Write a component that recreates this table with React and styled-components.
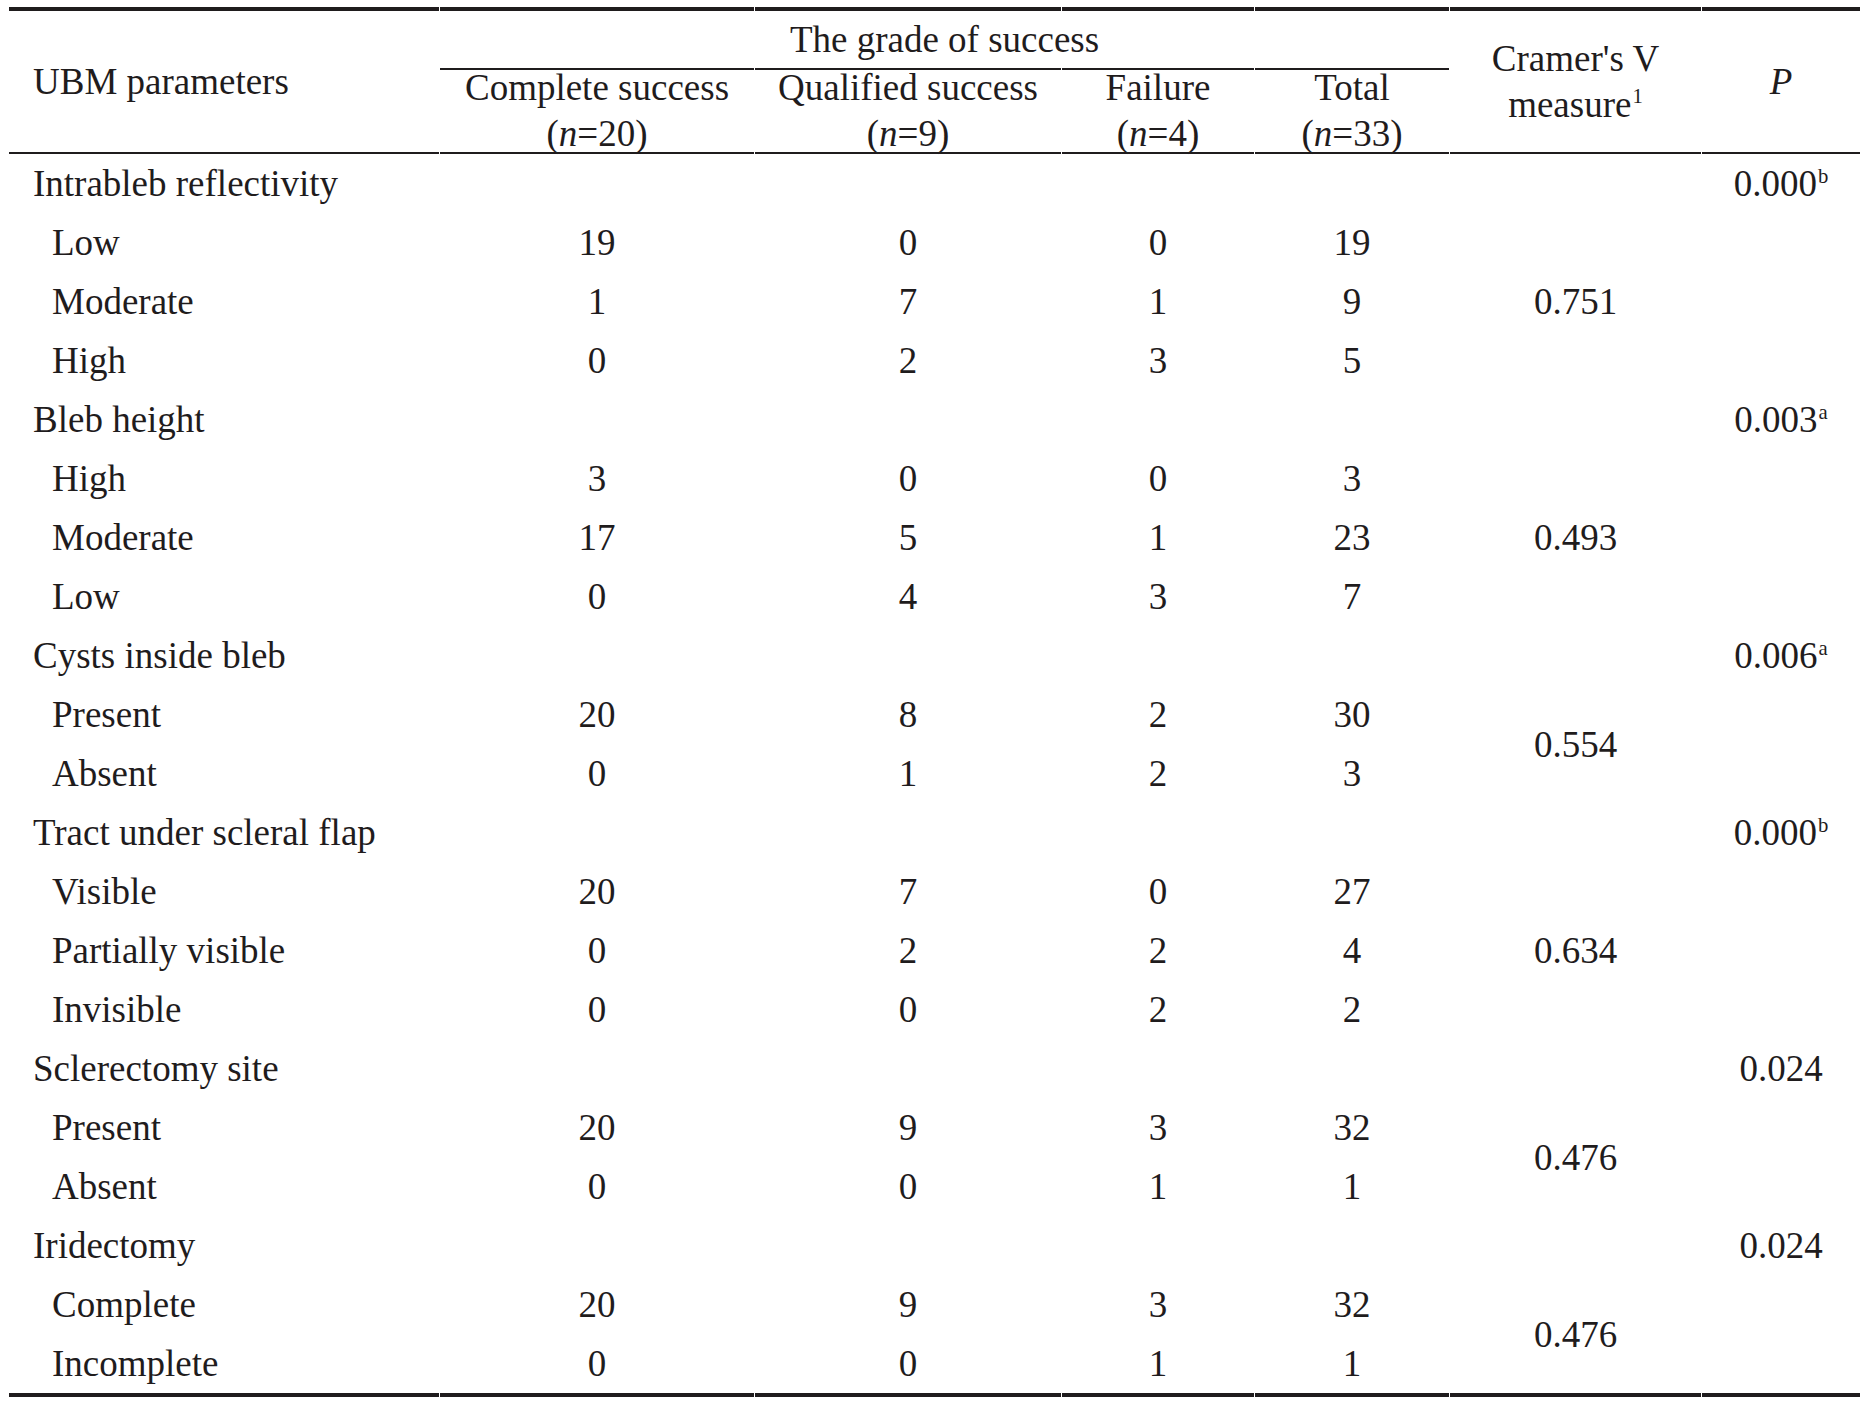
import React from 'react';
import styled, { createGlobalStyle } from 'styled-components';

const GlobalStyle = createGlobalStyle`
  body {
    margin: 0;
    background: #fff;
  }
`;

const COLS = '430px 314px 306px 192px 194px 251px 158px';
const INK = '#1f1c1d';

const Page = styled.div`
  padding: 7px 0 0 9px;
  font-family: 'Liberation Serif', 'Times New Roman', serif;
  font-size: 37px;
  color: ${INK};
`;

const Table = styled.div`
  width: 1851px;
`;

const Rule = styled.div`
  display: grid;
  grid-template-columns: ${COLS};
  column-gap: 1px;
`;

const RuleSeg = styled.div`
  height: ${p => p.$h}px;
  background: ${INK};
`;

const HeadGrid = styled.div`
  display: grid;
  grid-template-columns: ${COLS};
  grid-template-rows: 57px 84px;
  column-gap: 1px;
`;

const HeadCell = styled.div`
  grid-column: ${p => p.$col};
  grid-row: ${p => p.$row};
  display: flex;
  flex-direction: column;
  justify-content: center;
  align-items: ${p => (p.$left ? 'flex-start' : 'center')};
  padding-left: ${p => (p.$left ? '24px' : '0')};
  border-top: ${p => (p.$rule ? `2px solid ${INK}` : 'none')};
  line-height: 46px;
  white-space: nowrap;
  font-style: ${p => (p.$italic ? 'italic' : 'normal')};
`;

const BodyGrid = styled.div`
  display: grid;
  grid-template-columns: ${COLS};
  grid-template-rows: repeat(21, 59px);
  column-gap: 1px;
`;

const Cell = styled.div`
  grid-column: ${p => p.$col};
  grid-row: ${p => p.$row} / span ${p => p.$span || 1};
  display: flex;
  align-items: center;
  justify-content: ${p => (p.$indent ? 'flex-start' : 'center')};
  padding-left: ${p => p.$indent || 0}px;
  white-space: nowrap;
`;

const Sup = styled.sup`
  font-size: 0.56em;
  line-height: 0;
  vertical-align: super;
  margin-left: 1px;
`;

const Em = styled.i`
  font-style: italic;
`;

const groups = [
  {
    name: 'Intrableb reflectivity', p: '0.000', sup: 'b', v: '0.751',
    rows: [['Low', 19, 0, 0, 19], ['Moderate', 1, 7, 1, 9], ['High', 0, 2, 3, 5]],
  },
  {
    name: 'Bleb height', p: '0.003', sup: 'a', v: '0.493',
    rows: [['High', 3, 0, 0, 3], ['Moderate', 17, 5, 1, 23], ['Low', 0, 4, 3, 7]],
  },
  {
    name: 'Cysts inside bleb', p: '0.006', sup: 'a', v: '0.554',
    rows: [['Present', 20, 8, 2, 30], ['Absent', 0, 1, 2, 3]],
  },
  {
    name: 'Tract under scleral flap', p: '0.000', sup: 'b', v: '0.634',
    rows: [['Visible', 20, 7, 0, 27], ['Partially visible', 0, 2, 2, 4], ['Invisible', 0, 0, 2, 2]],
  },
  {
    name: 'Sclerectomy site', p: '0.024', v: '0.476',
    rows: [['Present', 20, 9, 3, 32], ['Absent', 0, 0, 1, 1]],
  },
  {
    name: 'Iridectomy', p: '0.024', v: '0.476',
    rows: [['Complete', 20, 9, 3, 32], ['Incomplete', 0, 0, 1, 1]],
  },
];

const outcomes = [
  ['Complete success', 20],
  ['Qualified success', 9],
  ['Failure', 4],
  ['Total', 33],
];

const FullRule = ({ h }) => (
  <Rule>
    {[0, 1, 2, 3, 4, 5, 6].map(i => <RuleSeg key={i} $h={h} />)}
  </Rule>
);

const Header = () => (
  <HeadGrid>
    <HeadCell $col="1" $row="1 / 3" $left>UBM parameters</HeadCell>
    <HeadCell $col="2 / 6" $row="1">The grade of success</HeadCell>
    {outcomes.map(([label, n], i) => (
      <HeadCell key={label} $col={i + 2} $row="2" $rule>
        <span>{label}</span>
        <span>(<Em>n</Em>={n})</span>
      </HeadCell>
    ))}
    <HeadCell $col="6" $row="1 / 3">
      <span>Cramer's V</span>
      <span>measure<Sup>1</Sup></span>
    </HeadCell>
    <HeadCell $col="7" $row="1 / 3" $italic>P</HeadCell>
  </HeadGrid>
);

const Body = () => {
  let row = 1;
  const cells = [];
  groups.forEach(g => {
    const top = row;
    cells.push(
      <Cell key={`${g.name}-l`} $col="1 / 7" $row={top} $indent={24}>{g.name}</Cell>,
      <Cell key={`${g.name}-p`} $col="7" $row={top}>
        <span>{g.p}{g.sup && <Sup>{g.sup}</Sup>}</span>
      </Cell>
    );
    g.rows.forEach(([label, ...nums], j) => {
      const r = top + 1 + j;
      cells.push(
        <Cell key={`${g.name}-${label}`} $col="1" $row={r} $indent={43}>{label}</Cell>
      );
      nums.forEach((n, k) => {
        cells.push(<Cell key={`${g.name}-${label}-${k}`} $col={k + 2} $row={r}>{n}</Cell>);
      });
    });
    cells.push(
      <Cell key={`${g.name}-v`} $col="6" $row={top + 1} $span={g.rows.length}>{g.v}</Cell>
    );
    row = top + 1 + g.rows.length;
  });
  return <BodyGrid>{cells}</BodyGrid>;
};

export default function App() {
  return (
    <Page>
      <GlobalStyle />
      <Table>
        <FullRule h={4} />
        <Header />
        <FullRule h={2} />
        <Body />
        <FullRule h={4} />
      </Table>
    </Page>
  );
}
